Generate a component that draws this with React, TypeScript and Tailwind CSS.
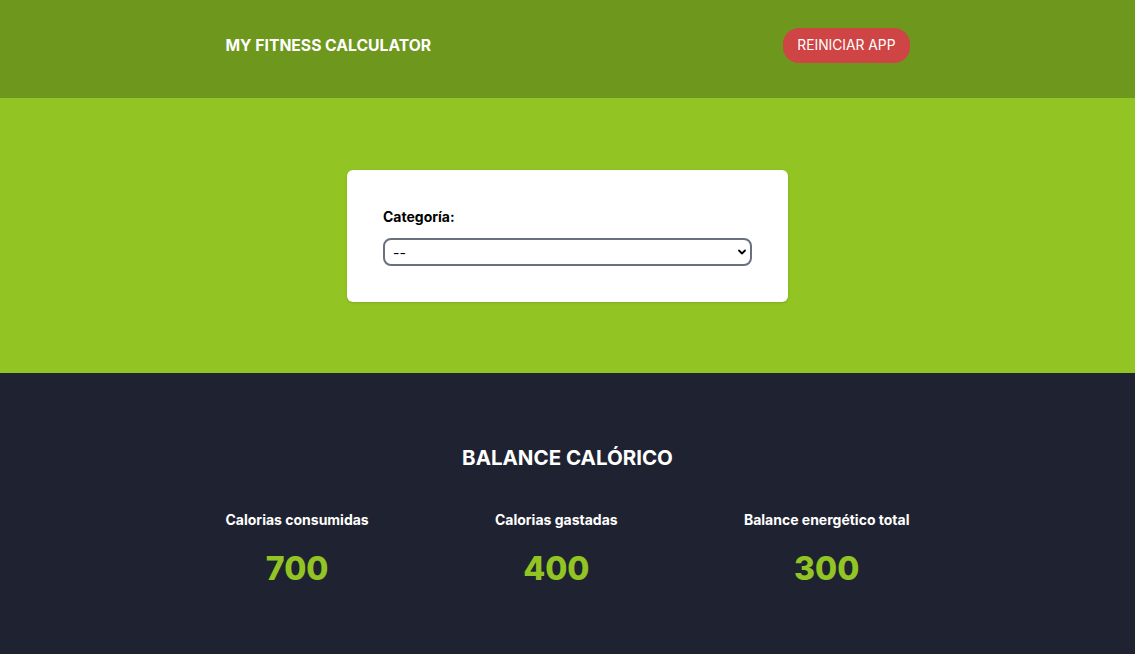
import { useState } from 'react';

const stats = [
  { label: 'Calorias consumidas', value: 700 },
  { label: 'Calorias gastadas', value: 400 },
  { label: 'Balance energético total', value: 300 },
];

export default function App() {
  const [category, setCategory] = useState('');

  return (
    <div className="min-h-svh font-['Inter',sans-serif]">
      {/* ── Header ── */}
      <header className="h-[98px] bg-[#6e971e] pt-7">
        <div className="mx-auto flex h-[35px] w-[684px] items-center justify-between">
          <h1 className="text-[15.7px] font-bold uppercase text-white">My Fitness Calculator</h1>
          <button
            onClick={() => setCategory('')}
            className="h-[35px] rounded-2xl bg-[#cf4444] px-[14px] text-[13.8px] uppercase text-white"
          >
            Reiniciar App
          </button>
        </div>
      </header>

      {/* ── Form ── */}
      <section className="bg-[#92c424] pt-[72px] pb-[71px]">
        <div className="mx-auto w-[441px] rounded-md bg-white p-9 shadow">
          <label htmlFor="category" className="mb-[11px] block text-[14px] font-bold text-black">
            Categoría:
          </label>
          <div className="relative">
            <select
              id="category"
              value={category}
              onChange={e => setCategory(e.target.value)}
              className="block h-[28px] w-full appearance-none rounded-lg border-2 border-[#6b7080] bg-white pl-[8px] text-[14px] text-black"
            >
              <option value="">--</option>
              <option value="1">Comida</option>
              <option value="2">Ejercicio</option>
            </select>
            <svg
              className="pointer-events-none absolute right-[5px] top-1/2 -translate-y-1/2"
              width="10" height="10" viewBox="0 0 10 10" fill="none"
            >
              <path d="M2 3.5 5 6.5 8 3.5" stroke="#000" strokeWidth="1.8" strokeLinecap="round" strokeLinejoin="round" />
            </svg>
          </div>
        </div>
      </section>

      {/* ── Balance ── */}
      <section className="bg-[#1f2331] pt-[71px] pb-[80px]">
        <div className="mx-auto w-[684px]">
          <h2 className="text-center text-[20.5px] leading-7 font-bold uppercase text-white">Balance Calórico</h2>
          <div className="mt-[37px] flex justify-between">
            {stats.map(s => (
              <div key={s.label} className="flex flex-col items-center">
                <p className="text-[14px] font-bold text-white">{s.label}</p>
                <p className="mt-[19px] text-[32px] leading-10 font-extrabold text-[#92c424]">{s.value}</p>
              </div>
            ))}
          </div>
        </div>
      </section>
    </div>
  );
}
